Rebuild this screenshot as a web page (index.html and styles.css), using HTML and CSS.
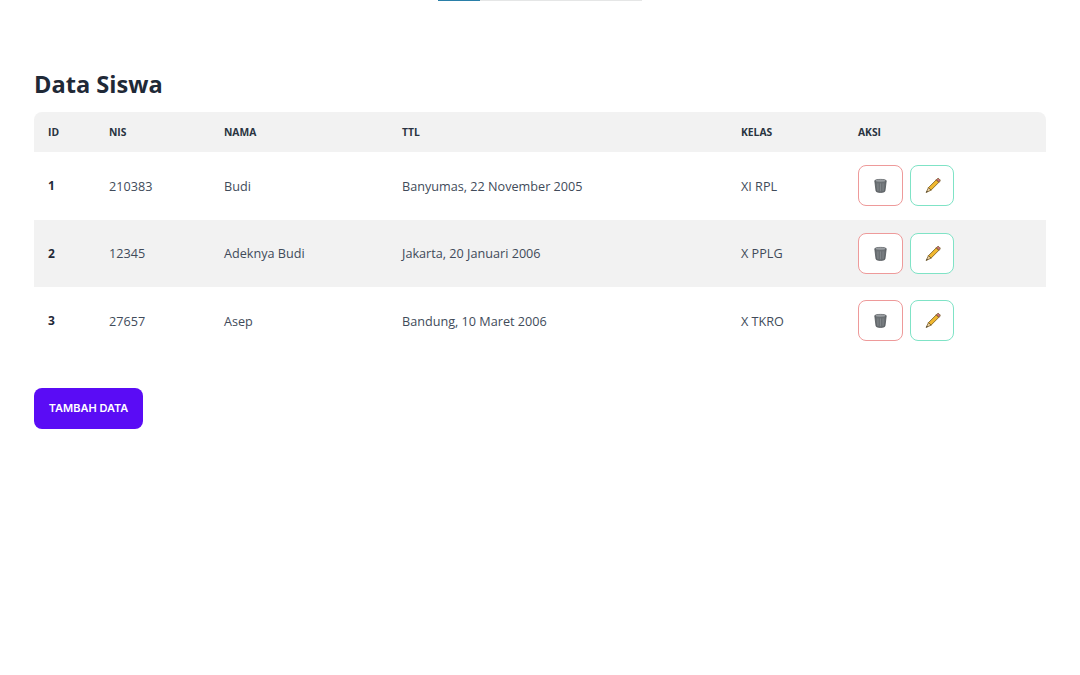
FILE: index.html
```html
<!DOCTYPE html>
<html lang="id">
<head>
  <meta charset="UTF-8" />
  <meta name="viewport" content="width=device-width, initial-scale=1.0"/>
  <title>Data Siswa</title>
  <link rel="stylesheet" href="styles.css">
</head>
<body>

  <div class="progress"><div class="progress-bar"></div></div>

  <main class="content">
    <h1>Data Siswa</h1>

    <table class="table">
      <colgroup>
        <col class="col-id"><col class="col-nis"><col class="col-nama"><col class="col-ttl"><col class="col-kelas"><col>
      </colgroup>
      <thead>
        <tr><th>ID</th><th>NIS</th><th>NAMA</th><th>TTL</th><th>KELAS</th><th>AKSI</th></tr>
      </thead>
      <tbody>
        <tr>
          <th>1</th><td>210383</td><td>Budi</td><td>Banyumas, 22 November 2005</td><td>XI RPL</td>
          <td class="aksi">
            <button class="btn-icon btn-delete"><svg width="17" height="17" viewBox="0 0 16 16"><use href="#trash"/></svg></button>
            <button class="btn-icon btn-edit"><svg width="17" height="17" viewBox="0 0 16 16"><use href="#pencil"/></svg></button>
          </td>
        </tr>
        <tr class="alt">
          <th>2</th><td>12345</td><td>Adeknya Budi</td><td>Jakarta, 20 Januari 2006</td><td>X PPLG</td>
          <td class="aksi">
            <button class="btn-icon btn-delete"><svg width="17" height="17" viewBox="0 0 16 16"><use href="#trash"/></svg></button>
            <button class="btn-icon btn-edit"><svg width="17" height="17" viewBox="0 0 16 16"><use href="#pencil"/></svg></button>
          </td>
        </tr>
        <tr>
          <th>3</th><td>27657</td><td>Asep</td><td>Bandung, 10 Maret 2006</td><td>X TKRO</td>
          <td class="aksi">
            <button class="btn-icon btn-delete"><svg width="17" height="17" viewBox="0 0 16 16"><use href="#trash"/></svg></button>
            <button class="btn-icon btn-edit"><svg width="17" height="17" viewBox="0 0 16 16"><use href="#pencil"/></svg></button>
          </td>
        </tr>
      </tbody>
    </table>

    <button class="btn-tambah">TAMBAH DATA</button>
  </main>

  <!-- ikon -->
  <svg class="icon-defs" width="0" height="0">
    <defs>
      <g id="trash">
        <path d="M2.6 3.6 C2.6 1.8 13.4 1.8 13.4 3.6 L12.2 13.2 C12 15 4 15 3.8 13.2 Z" fill="#6b7074" stroke="#474b4f" stroke-width=".7"/>
        <ellipse cx="8" cy="3.4" rx="4.6" ry="1.1" fill="#9a9ea2"/>
        <path d="M5.6 6v7M8 6v7.4M10.4 6v7" stroke="#868b8f" stroke-width=".8"/>
      </g>
      <g id="pencil">
        <path d="M4.2 10 L11.6 2.6 L14 5 L6.6 12.4 Z" fill="#f0b72f" stroke="#6b4d10" stroke-width=".7"/>
        <path d="M11.6 2.6 L12.6 1.6 C13 1.2 13.6 1.2 14 1.6 L15 2.6 C15.3 3 15.3 3.6 15 4 L14 5 Z" fill="#c9707f" stroke="#6b4d10" stroke-width=".7"/>
        <path d="M4.2 10 L6.6 12.4 L2 14.6 Z" fill="#eed3a5" stroke="#6b4d10" stroke-width=".7"/>
        <path d="M2.8 13 L2 14.6 L3.6 13.8 Z" fill="#333"/>
      </g>
    </defs>
  </svg>

</body>
</html>
```

FILE: styles.css
```css
body {
  margin: 0;
  font-family: 'Open Sans', 'Noto Sans', sans-serif;
  background: #fff;
  color: #1f2937;
}

/* Garis progress di atas */
.progress {
  width: 204px;
  height: 1px;
  margin-left: 438px;
  background: #e5e6e6;
}

.progress-bar {
  width: 42px;
  height: 1px;
  background: #2a7fa8;
}

.content {
  padding: 68px 34px 0;
}

h1 {
  margin: 0 0 13px;
  font-size: 23.6px;
  line-height: 30px;
  font-weight: 700;
  color: #1f2937;
}

.table {
  width: 100%;
  border-collapse: separate;
  border-spacing: 0;
  table-layout: fixed;
  font-size: 12.65px;
}

.col-id { width: 61px; }
.col-nis { width: 115px; }
.col-nama { width: 178px; }
.col-ttl { width: 339px; }
.col-kelas { width: 117px; }

.table th,
.table td {
  padding: 0 14px;
  text-align: left;
  color: #414b5a;
}

.table thead tr {
  height: 40px;
  background: #f2f2f2;
}

.table thead th {
  font-size: 10.3px;
  font-weight: 700;
  color: #2a3441;
}

.table thead th:first-child { border-top-left-radius: 8px; }
.table thead th:last-child { border-top-right-radius: 8px; }

.table tbody tr { height: 67.5px; }
.table tbody th { color: #1f2937; font-weight: 700; font-size: 12px; }
.table tr.alt { background: #f2f2f2; }

.btn-icon {
  width: 45px;
  height: 41px;
  padding: 0;
  margin-right: 4px;
  background: #fff;
  border-radius: 8px;
  border: 1px solid;
  display: inline-flex;
  align-items: center;
  justify-content: center;
  vertical-align: middle;
  cursor: pointer;
}

.btn-delete { border-color: #ee9a9a; }
.btn-edit { border-color: #7fe3c6; width: 44px; }

.btn-tambah {
  display: block;
  margin-top: 33px;
  width: 109px;
  height: 41px;
  padding: 0;
  border: none;
  border-radius: 8px;
  background: #5a0cf5;
  color: #fff;
  font-family: 'Inter', sans-serif;
  font-size: 11px;
  font-weight: 600;
  cursor: pointer;
}

.icon-defs { position: absolute; }
```
